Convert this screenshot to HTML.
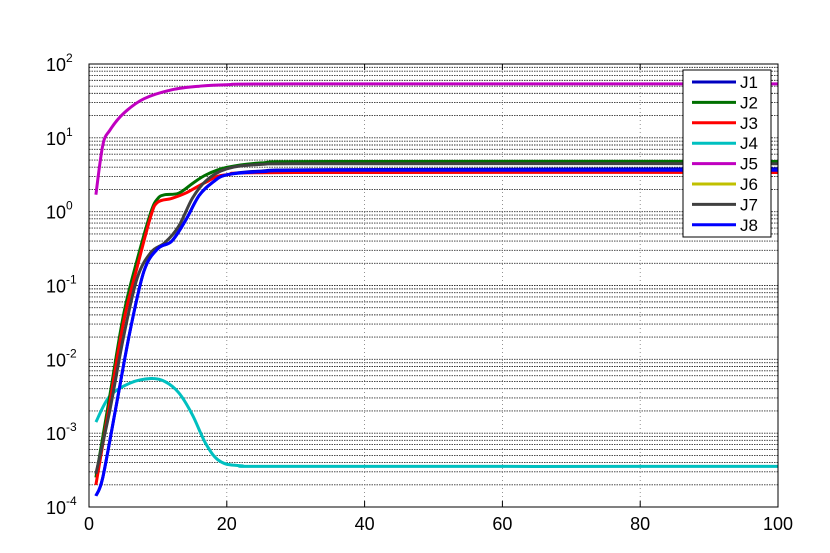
<!DOCTYPE html>
<html><head><meta charset="utf-8"><style>
html,body{margin:0;padding:0;background:#fff;}
svg{display:block;font-family:"Liberation Sans",sans-serif;}
</style></head><body>
<svg id="s" width="830" height="553" xmlns="http://www.w3.org/2000/svg">
<rect width="830" height="553" fill="#fff"/>
<g id="grid"></g>
<g id="curves" fill="none" stroke-width="3" stroke-linejoin="round"></g>
<rect x="89" y="64" width="689" height="443" fill="none" stroke="#000" stroke-width="1"/>
<g id="labels" font-size="18" fill="#000"></g>
<g>
<rect x="683" y="70" width="88" height="167" fill="#fff" stroke="#000"/>
</g>
<g id="leg" font-size="17"></g>
</svg>
<script>
var L=89,R=778,T=64,B=507,D=(B-T)/6;
function X(x){return L+x*(R-L)/100;}
function Y(l){return B-(l+4)*D;}
var ns="http://www.w3.org/2000/svg";
function el(p,t,a,txt){var e=document.createElementNS(ns,t);for(var k in a)e.setAttribute(k,a[k]);if(txt!=null)e.textContent=txt;document.getElementById(p).appendChild(e);return e;}
for(var d=-4;d<2;d++){for(var m=2;m<=9;m++){var y=Y(d+Math.log10(m));el("grid","line",{x1:L,x2:R,y1:y,y2:y,stroke:"#333","stroke-width":0.9,"stroke-dasharray":"1.5,1"});}}
for(var d=-3;d<2;d++){var y=Y(d);el("grid","line",{x1:L,x2:R,y1:y,y2:y,stroke:"#333","stroke-width":0.9,"stroke-dasharray":"1.5,1"});}
for(var x=20;x<100;x+=20){el("grid","line",{x1:X(x),x2:X(x),y1:T,y2:B,stroke:"#777","stroke-width":0.8,"stroke-dasharray":"1,3"});
el("grid","line",{x1:X(x),x2:X(x),y1:B,y2:B-6,stroke:"#000"});el("grid","line",{x1:X(x),x2:X(x),y1:T,y2:T+6,stroke:"#000"});}
for(var x=0;x<=100;x+=20){el("labels","text",{x:X(x),y:530,"text-anchor":"middle"},""+x);}
for(var d=-4;d<=2;d++){var t=el("labels","text",{x:46,y:Y(d)+7});t.textContent="10";var s=document.createElementNS(ns,"tspan");s.setAttribute("dy","-9");s.setAttribute("font-size","12");s.textContent=""+d;t.appendChild(s);}
var C={
J5:["#c000c0",[[1,0.23],[2,0.9],[3,1.1],[5,1.33],[8,1.53],[12,1.65],[16,1.7],[20,1.72],[30,1.73],[100,1.73]]],
J4:["#00c0c0",[[1,-2.85],[3,-2.5],[6,-2.32],[9,-2.26],[11,-2.3],[13,-2.45],[15,-2.75],[17,-3.15],[19,-3.38],[22,-3.44],[30,-3.45],[100,-3.45]]],
J2:["#007000",[[1,-3.6],[3,-2.5],[5,-1.4],[7,-0.65],[9,0.0],[10,0.18],[11,0.23],[13,0.25],[15,0.38],[17,0.5],[20,0.6],[25,0.66],[35,0.68],[100,0.68]]],
J3:["#ff0000",[[1,-3.7],[3,-2.6],[5,-1.5],[7,-0.75],[9,-0.05],[10,0.13],[12,0.18],[14,0.25],[17,0.4],[20,0.5],[30,0.53],[100,0.53]]],
J7:["#404040",[[1,-3.55],[3,-2.7],[5,-1.7],[7,-0.9],[9,-0.55],[11,-0.42],[13,-0.2],[15,0.18],[17,0.42],[20,0.58],[25,0.64],[35,0.65],[100,0.65]]],
J1:["#0000c0",[[1,-3.85],[2,-3.6],[4,-2.6],[6,-1.6],[8,-0.8],[10,-0.5],[12,-0.4],[14,-0.12],[16,0.22],[18,0.4],[20,0.5],[25,0.55],[35,0.57],[100,0.58]]],
J8:["#0000ff",[[1,-3.85],[2,-3.6],[4,-2.6],[6,-1.6],[8,-0.8],[10,-0.5],[12,-0.4],[14,-0.12],[16,0.22],[18,0.4],[20,0.5],[25,0.54],[35,0.56],[100,0.56]]]
};
function smooth(pts){var P=pts.map(function(q){return [X(q[0]),Y(q[1])];});var d="M"+P[0][0].toFixed(1)+","+P[0][1].toFixed(1);
for(var i=0;i<P.length-1;i++){var p0=P[Math.max(0,i-1)],p1=P[i],p2=P[i+1],p3=P[Math.min(P.length-1,i+2)];
var c1=[p1[0]+(p2[0]-p0[0])/6,p1[1]+(p2[1]-p0[1])/6],c2=[p2[0]-(p3[0]-p1[0])/6,p2[1]-(p3[1]-p1[1])/6];
d+=" C"+c1[0].toFixed(1)+","+c1[1].toFixed(1)+" "+c2[0].toFixed(1)+","+c2[1].toFixed(1)+" "+p2[0].toFixed(1)+","+p2[1].toFixed(1);}return d;}
for(var k in C){el("curves","path",{d:smooth(C[k][1]),stroke:C[k][0]});}
var lg=[["J1","#0000c0"],["J2","#007000"],["J3","#ff0000"],["J4","#00c0c0"],["J5","#c000c0"],["J6","#c0c000"],["J7","#404040"],["J8","#0000ff"]];
lg.forEach(function(a,i){var y=82+i*20.4;el("leg","line",{x1:692,x2:736,y1:y,y2:y,stroke:a[1],"stroke-width":3});el("leg","text",{x:740,y:y+6},a[0]);});
</script>
</body></html>
